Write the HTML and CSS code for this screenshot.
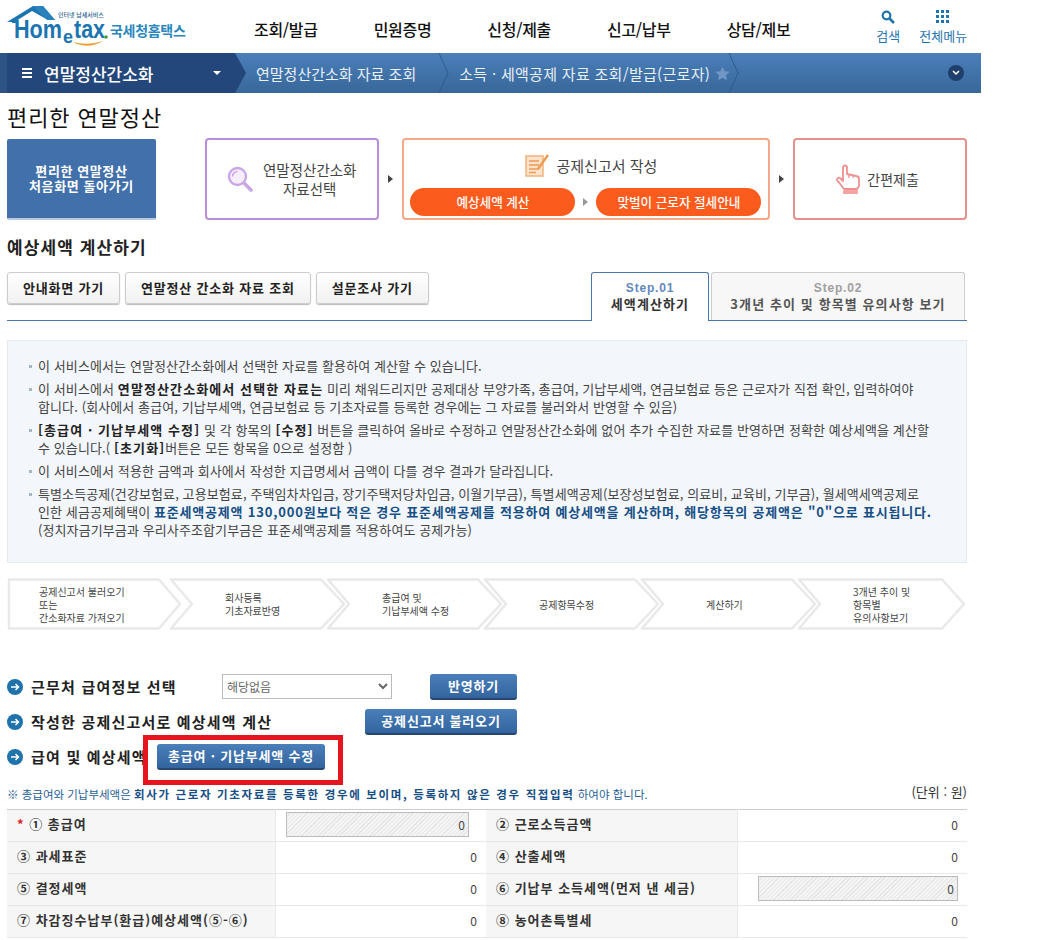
FILE: index.html
```html
<!DOCTYPE html>
<html lang="ko">
<head>
<meta charset="utf-8">
<title>편리한 연말정산</title>
<link rel="stylesheet" href="styles.css">
</head>
<body>
<header class="top">
  <svg class="logo" width="190" height="50" viewBox="0 0 190 50">
    <path d="M7 22 L33 6 L43 6 L55 20 L48 20 L32 11 L16 21 L16 23 L12 23 L12 22 Z" fill="#1c75b0"/>
    <path d="M33 6 L43 6 L55 20 L47 20 Z" fill="#2a82bd"/>
    <text x="58" y="17" class="logo-tiny">인터넷 납세서비스</text>
    <text x="14" y="38" class="logo-word" textLength="48" lengthAdjust="spacingAndGlyphs">Hom</text>
    <text x="63" y="43" class="logo-e">e</text>
    <text x="74" y="38" class="logo-word" textLength="31" lengthAdjust="spacingAndGlyphs">tax</text>
    <circle cx="106" cy="37" r="1.8" fill="#3d9a3f"/>
    <path d="M73 42 Q88 50 103 41 Q88 46 73 42 Z" fill="#f0a030"/>
    <text x="110" y="36" class="logo-kr">국세청홈택스</text>
  </svg>
  <nav class="gnb">
    <a>조회/발급</a><a>민원증명</a><a>신청/제출</a><a>신고/납부</a><a>상담/제보</a>
  </nav>
  <div class="tools">
    <div class="tool tool-search">
      <svg width="14" height="14" viewBox="0 0 14 14"><circle cx="5.5" cy="5.5" r="3.8" fill="none" stroke="#1f74ad" stroke-width="2.2"/><path d="M8.5 8.5 L13 13" stroke="#1f74ad" stroke-width="2.6"/></svg>
      <span>검색</span>
    </div>
    <div class="tool">
      <svg width="14" height="14" viewBox="0 0 14 14" fill="#1f74ad"><rect x="0" y="0" width="3" height="3"/><rect x="5" y="0" width="3" height="3"/><rect x="10" y="0" width="3" height="3"/><rect x="0" y="5" width="3" height="3"/><rect x="5" y="5" width="3" height="3"/><rect x="10" y="5" width="3" height="3"/><rect x="0" y="10" width="3" height="3"/><rect x="5" y="10" width="3" height="3"/><rect x="10" y="10" width="3" height="3"/></svg>
      <span>전체메뉴</span>
    </div>
  </div>
</header>

<div class="crumbs">
  <div class="crumb-main">
    <span class="burger"></span>
    <span class="crumb-title">연말정산간소화</span>
    <span class="caret"></span>
  </div>
  <span class="crumb crumb-a">연말정산간소화 자료 조회</span>
  <svg class="sep" width="12" height="40" viewBox="0 0 12 40"><path d="M1 0 L10 20 L1 40" fill="none" stroke="#2f5a90"/></svg>
  <span class="crumb crumb-b">소득 · 세액공제 자료 조회/발급(근로자)</span>
  <svg class="star" width="15" height="15" viewBox="0 0 24 24"><path d="M12 1 L15.4 8.4 L23.5 9.3 L17.5 14.8 L19.1 22.8 L12 18.8 L4.9 22.8 L6.5 14.8 L.5 9.3 L8.6 8.4 Z" fill="#7097c4"/></svg>
  <svg class="sep sep-end" width="12" height="40" viewBox="0 0 12 40"><path d="M1 0 L10 20 L1 40" fill="none" stroke="#2f5a90"/></svg>
  <span class="more"><svg width="8" height="6" viewBox="0 0 8 6"><path d="M1 1 L4 4 L7 1" fill="none" stroke="#fff" stroke-width="1.5"/></svg></span>
</div>

<main class="page">
  <h1 class="page-title">편리한 연말정산</h1>

  <section class="process">
    <a class="home-btn">편리한 연말정산<br>처음화면 돌아가기</a>
    <div class="pbox pbox-1">
      <svg width="26" height="26" viewBox="0 0 26 26"><circle cx="10.5" cy="10.5" r="8.5" fill="#f6effb" stroke="#c9a6e6" stroke-width="2.4"/><path d="M5.5 10.5 a5 5 0 0 1 5 -5" fill="none" stroke="#c9a6e6" stroke-width="1.6"/><path d="M17 17 L24 24" stroke="#c9a6e6" stroke-width="3.6" stroke-linecap="round"/></svg>
      <span>연말정산간소화<br>자료선택</span>
    </div>
    <span class="tri"></span>
    <div class="pbox-2">
      <div class="pbox-2-title">
        <svg width="25" height="23" viewBox="0 0 25 23"><rect x="1" y="2" width="17" height="20" fill="#fbe3cb" stroke="#f2b27c" stroke-width="1.5"/><path d="M4 7 H14 M4 11 H14 M4 15 H14 M4 18.500 H11" stroke="#e99c58" stroke-width="1.3"/><path d="M13 15 L23 1" stroke="#eb9a52" stroke-width="2.4"/></svg>
        <span>공제신고서 작성</span>
      </div>
      <div class="pills">
        <a class="pill">예상세액 계산</a>
        <span class="tri tri-sm"></span>
        <a class="pill">맞벌이 근로자 절세안내</a>
      </div>
    </div>
    <span class="tri"></span>
    <div class="pbox pbox-3">
      <svg width="26" height="30" viewBox="0 0 26 30"><path d="M8 17 V3.500 a2 2 0 0 1 4 0 V10 l9 2 a3 3 0 0 1 3 3 V22 l-2 3 H9 L2 16 a2 2 0 0 1 3 -2 Z" fill="#fff" stroke="#ef8f8f" stroke-width="1.8" stroke-linejoin="round"/><path d="M14 10 V14 M18 11 V14" stroke="#ef8f8f" stroke-width="1.3"/><rect x="8" y="26" width="15" height="4" rx="1" fill="#f5a3a3"/></svg>
      <span>간편제출</span>
    </div>
  </section>

  <h2 class="sub-title">예상세액 계산하기</h2>

  <section class="tabbar">
    <div class="btns">
      <a class="btn-light">안내화면 가기</a>
      <a class="btn-light">연말정산 간소화 자료 조회</a>
      <a class="btn-light">설문조사 가기</a>
    </div>
    <div class="tabs">
      <div class="tab tab-on"><b class="tab-step">Step.01</b><b>세액계산하기</b></div>
      <div class="tab tab-off"><b class="tab-step">Step.02</b><b>3개년 추이 및 항목별 유의사항 보기</b></div>
    </div>
  </section>

  <ul class="notice">
    <li>이 서비스에서는 연말정산간소화에서 선택한 자료를 활용하여 계산할 수 있습니다.</li>
    <li>이 서비스에서 <b>연말정산간소화에서 선택한 자료는</b> 미리 채워드리지만 공제대상 부양가족, 총급여, 기납부세액, 연금보험료 등은 근로자가 직접 확인, 입력하여야<br>합니다. (회사에서 총급여, 기납부세액, 연금보험료 등 기초자료를 등록한 경우에는 그 자료를 불러와서 반영할 수 있음)</li>
    <li><b>[총급여 · 기납부세액 수정]</b> 및 각 항목의 <b>[수정]</b> 버튼을 클릭하여 올바로 수정하고 연말정산간소화에 없어 추가 수집한 자료를 반영하면 정확한 예상세액을 계산할<br>수 있습니다.( <b>[초기화]</b>버튼은 모든 항목을 0으로 설정함 )</li>
    <li>이 서비스에서 적용한 금액과 회사에서 작성한 지급명세서 금액이 다를 경우 결과가 달라집니다.</li>
    <li>특별소득공제(건강보험료, 고용보험료, 주택임차차입금, 장기주택저당차입금, 이월기부금), 특별세액공제(보장성보험료, 의료비, 교육비, 기부금), 월세액세액공제로<br>인한 세금공제혜택이 <b class="em">표준세액공제액 130,000원보다 적은 경우 표준세액공제를 적용하여 예상세액을 계산하며, 해당항목의 공제액은 "0"으로 표시됩니다.</b><br>(정치자금기부금과 우리사주조합기부금은 표준세액공제를 적용하여도 공제가능)</li>
  </ul>

  <ol class="steps">
    <li class="step step-first">
      <svg class="step-bg" width="176" height="52" viewBox="0 0 176 52"><path d="M2 1.500 H152 L173 26 L152 50.500 H2 Z" fill="#fff" stroke="#e9e9e9" stroke-width="2.5" stroke-linejoin="round"/></svg>
      <span>공제신고서 불러오기<br>또는<br>간소화자료 가져오기</span>
    </li>
    <li class="step">
      <svg class="step-bg" width="200" height="52" viewBox="0 0 200 52"><path d="M7 1.500 H157 L180 26 L157 50.500 H7 L28 26 Z" fill="none" stroke="#e9e9e9" stroke-width="2.5" stroke-linejoin="round"/></svg>
      <span>회사등록<br>기초자료반영</span>
    </li>
    <li class="step">
      <svg class="step-bg" width="200" height="52" viewBox="0 0 200 52"><path d="M7 1.500 H157 L180 26 L157 50.500 H7 L28 26 Z" fill="none" stroke="#e9e9e9" stroke-width="2.5" stroke-linejoin="round"/></svg>
      <span>총급여 및<br>기납부세액 수정</span>
    </li>
    <li class="step">
      <svg class="step-bg" width="200" height="52" viewBox="0 0 200 52"><path d="M7 1.500 H157 L180 26 L157 50.500 H7 L28 26 Z" fill="none" stroke="#e9e9e9" stroke-width="2.5" stroke-linejoin="round"/></svg>
      <span>공제항목수정</span>
    </li>
    <li class="step step-five">
      <svg class="step-bg" width="200" height="52" viewBox="0 0 200 52"><path d="M7 1.500 H157 L180 26 L157 50.500 H7 L28 26 Z" fill="none" stroke="#e9e9e9" stroke-width="2.5" stroke-linejoin="round"/></svg>
      <span>계산하기</span>
    </li>
    <li class="step">
      <svg class="step-bg" width="200" height="52" viewBox="0 0 200 52"><path d="M7 1.500 H150 L172 26 L150 50.500 H7 L28 26 Z" fill="none" stroke="#e9e9e9" stroke-width="2.5" stroke-linejoin="round"/></svg>
      <span>3개년 추이 및<br>항목별<br>유의사항보기</span>
    </li>
  </ol>

  <section class="forms">
    <div class="frow frow-1">
      <span class="bullet"><svg width="16" height="16" viewBox="0 0 16 16"><circle cx="8" cy="8" r="8" fill="#1f73ad"/><path d="M4 8 H11 M8.500 5 L11.500 8 L8.500 11" fill="none" stroke="#fff" stroke-width="1.5"/></svg></span>
      <strong class="flabel flabel-1">근무처 급여정보 선택</strong>
      <select class="sel"><option>해당없음</option></select>
      <a class="btn-blue btn-apply">반영하기</a>
    </div>
    <div class="frow frow-2">
      <span class="bullet"><svg width="16" height="16" viewBox="0 0 16 16"><circle cx="8" cy="8" r="8" fill="#1f73ad"/><path d="M4 8 H11 M8.500 5 L11.500 8 L8.500 11" fill="none" stroke="#fff" stroke-width="1.5"/></svg></span>
      <strong class="flabel flabel-2">작성한 공제신고서로 예상세액 계산</strong>
      <a class="btn-blue btn-load">공제신고서 불러오기</a>
    </div>
    <div class="frow frow-3">
      <span class="bullet"><svg width="16" height="16" viewBox="0 0 16 16"><circle cx="8" cy="8" r="8" fill="#1f73ad"/><path d="M4 8 H11 M8.500 5 L11.500 8 L8.500 11" fill="none" stroke="#fff" stroke-width="1.5"/></svg></span>
      <strong class="flabel flabel-3">급여 및 예상세액</strong>
      <a class="btn-blue btn-edit">총급여 · 기납부세액 수정</a>
      <span class="redbox"></span>
    </div>
  </section>

  <div class="note-row">
    <p class="note">※ 총급여와 기납부세액은 <b>회사가 근로자 기초자료를 등록한 경우에 보이며, 등록하지 않은 경우 직접입력</b> 하여야 합니다.</p>
    <span class="unit">(단위 : 원)</span>
  </div>

  <table class="tbl">
    <colgroup><col class="c1"><col class="c2"><col class="c3"><col class="c4"></colgroup>
    <tr>
      <th><i class="req">*</i> ① 총급여</th>
      <td><div class="hatch hatch-1">0</div></td>
      <th>② 근로소득금액</th>
      <td>0</td>
    </tr>
    <tr><th>③ 과세표준</th><td>0</td><th>④ 산출세액</th><td>0</td></tr>
    <tr>
      <th>⑤ 결정세액</th>
      <td>0</td>
      <th>⑥ 기납부 소득세액(먼저 낸 세금)</th>
      <td><div class="hatch hatch-2">0</div></td>
    </tr>
    <tr><th>⑦ 차감징수납부(환급)예상세액(⑤-⑥)</th><td>0</td><th>⑧ 농어촌특별세</th><td>0</td></tr>
  </table>
</main>
</body>
</html>
```

FILE: styles.css
```css
* { box-sizing: border-box; }
html, body { margin: 0; padding: 0; }
body {
  width: 1049px;
  height: 940px;
  overflow: hidden;
  background: #fff;
  color: #333;
  font-family: "Noto Sans CJK KR", "Noto Sans", sans-serif;
  font-size: 12px;
}
a { color: inherit; text-decoration: none; }

/* header */
.top { display: flex; height: 53px; width: 981px; position: relative; }
.logo { flex: none; }
.logo-tiny { font-size: 6px; fill: #2a5f8f; font-weight: 500; }
.logo-word { font-family: "Liberation Sans", sans-serif; font-size: 25px; font-weight: 700; fill: #1c75b0; }
.logo-e { font-family: "Liberation Sans", sans-serif; font-size: 18px; font-weight: 700; fill: #1c75b0; }
.logo-kr { font-size: 14px; font-weight: 700; fill: #2a86bd; letter-spacing: -.3px; }
.gnb { display: flex; gap: 56px; margin-left: 64px; padding-top: 18px; font-size: 16px; font-weight: 500; color: #111; line-height: 22px; letter-spacing: -.3px; }
.tools { display: flex; gap: 19px; margin-left: 86px; padding-top: 10px; color: #1f74ad; font-size: 13px; }
.tool { display: flex; flex-direction: column; align-items: center; gap: 3px; line-height: 18px; }
.tool svg { display: block; }
.tool-search { width: 24px; }

/* breadcrumb */
.crumbs {
  display: flex;
  align-items: center;
  width: 981px;
  height: 40px;
  background: linear-gradient(#4b7fba, #386799);
  color: #e8f0f8;
  font-size: 15px;
}
.crumb-main {
  display: flex;
  align-items: center;
  width: 246px;
  height: 40px;
  padding-left: 22px;
  background: #24477b;
  clip-path: polygon(0 0, 235px 0, 246px 20px, 235px 40px, 0 40px);
  color: #fff;
  font-size: 17px;
  font-weight: 500;
  box-shadow: inset 7px 0 0 #2d5284;
}
.burger { width: 10px; height: 10px; border-top: 2px solid #fff; border-bottom: 2px solid #fff; position: relative; flex: none; }
.burger::after { content: ""; position: absolute; left: 0; right: 0; top: 2px; height: 2px; background: #fff; }
.crumb-title { margin-left: 12px; }
.caret { margin-left: 60px; border: 4px solid transparent; border-top: 4px solid #fff; border-bottom: 0; }
.crumb-a { margin-left: 10px; }
.sep { flex: none; margin-left: 22px; }
.crumb-b { margin-left: 9px; letter-spacing: .3px; }
.star { margin-left: 5px; flex: none; }
.sep-end { margin-left: -2px; }
.more { display: flex; align-items: center; justify-content: center; width: 16px; height: 16px; margin-left: auto; margin-right: 17px; border-radius: 50%; background: #1f3f6c; }

/* page */
.page { width: 967px; padding-left: 7px; }
.page-title { margin: 0; padding-top: 9px; height: 45px; font-size: 22px; line-height: 28px; font-weight: 400; color: #111; letter-spacing: .9px; }

.process { display: flex; align-items: center; height: 82px; font-size: 14.500px; }
.home-btn {
  display: flex; align-items: center; justify-content: center;
  width: 149px; height: 81px; margin-right: 49px;
  background: #4170ab; border-radius: 2px; border-bottom: 2px solid #b5c9e2;
  color: #fff; font-size: 13px; font-weight: 700; line-height: 15px; text-align: center; letter-spacing: .6px;
}
.pbox {
  display: flex; align-items: center; justify-content: center;
  width: 174px; height: 82px; background: #fff; border: 2px solid; border-radius: 4px;
  color: #444; line-height: 19px; text-align: center;
}
.pbox-1 { border-color: #b78fdd; gap: 10px; }
.pbox-3 { border-color: #e58f8f; gap: 6px; font-size: 14px; padding-right: 6px; }
.tri { flex: none; margin: 0 9px; border: 4px solid transparent; border-left: 5px solid #444; border-right: 0; width: 0; height: 0; }
.tri-sm { margin: 0 8px; border-left-color: #999; }
.pbox-2 {
  width: 369px; height: 82px; border: 2px solid #f5a888; border-radius: 4px;
  display: flex; flex-direction: column; align-items: center;
}
.pbox-2-title { display: flex; align-items: center; gap: 7px; height: 48px; color: #444; padding-top: 2px; padding-left: 10px; font-size: 15px; }
.pills { display: flex; align-items: center; }
.pill {
  display: block; width: 165px; height: 28px; border-radius: 14px;
  background: #fb5c1e; color: #fff; font-size: 12.600px; line-height: 27px; text-align: center; font-weight: 500;
}

.sub-title { margin: 16px 0 0; height: 36px; font-size: 17px; line-height: 22px; font-weight: 700; color: #222; letter-spacing: 1.100px; }

.tabbar { display: flex; justify-content: space-between; align-items: flex-start; height: 49px; border-bottom: 1px solid #4a75a8; }
.btns { display: flex; gap: 5px; }
.btn-light {
  display: block; height: 32px; padding: 0 15px; border: 1px solid #ccc; border-radius: 3px;
  background: linear-gradient(#fff, #f1f1f1); box-shadow: 0 1px 1px #bbb;
  color: #222; font-weight: 700; line-height: 30px; letter-spacing: .8px; font-size: 13px;
}
.tabs { display: flex; height: 49px; margin-right: 2px; }
.tab { display: flex; flex-direction: column; align-items: center; padding-top: 8px; line-height: 15px; border: 1px solid; border-bottom: 0; border-radius: 3px 3px 0 0; font-size: 13px; letter-spacing: 1.100px; }
.tab-step { font-family: "Liberation Sans", sans-serif; font-size: 12px; letter-spacing: .8px; }
.tab-on { width: 118px; background: #fff; border-color: #4a75a8; color: #333; height: 49px; }
.tab-on .tab-step { color: #6288bc; }
.tab-off { width: 254px; margin-left: 2px; height: 48px; background: #f7f7f7; border-color: #ccc; color: #555; }
.tab-off .tab-step { color: #a0a0a0; }

.notice {
  list-style: none; margin: 19px 0 0; height: 223px; padding: 16px 30px 0;
  background: #f3f6fb; border: 1px solid #e6eaf0;
  color: #444; font-size: 13px; line-height: 18px; letter-spacing: .1px;
}
.notice li { position: relative; margin-bottom: 5px; white-space: nowrap; }
.notice li::before { content: ""; position: absolute; left: -9px; top: 8px; width: 3px; height: 3px; background: #a9b6c4; }
.notice b { color: #222; letter-spacing: 1.100px; }
.notice .em { color: #174f85; letter-spacing: .8px; }

.steps { list-style: none; display: flex; margin: 15px 0 0; padding: 0; height: 52px; }
.step { position: relative; flex: none; width: 157px; display: flex; align-items: center; padding-left: 61px; font-size: 10px; line-height: 13px; color: #444; white-space: nowrap; }
.step-first { padding-left: 32px; }
.step-five { padding-left: 71px; }
.step-bg { position: absolute; left: 0; top: 0; }
.step span { position: relative; }

.forms { margin-top: 39px; width: 510px; display: flex; flex-direction: column; }
.frow { display: flex; align-items: center; height: 35px; position: relative; }
.bullet { flex: none; display: block; width: 16px; height: 16px; margin-right: 8px; }
.bullet svg { display: block; }
.flabel { font-size: 15px; font-weight: 700; color: #222; white-space: nowrap; letter-spacing: 1.200px; }
.flabel-1 { width: 191px; }
.flabel-2 { flex: 1; }
.flabel-3 { width: 112px; flex: none; }
.sel { width: 170px; height: 25px; margin-right: 38px; background: #fff; border: 1px solid #bbb; padding-left: 0; font-family: inherit; font-size: 12px; color: #666; }
.btn-blue {
  display: block; height: 26px; border-radius: 3px; background: linear-gradient(#4a7fba, #33649e);
  border-bottom: 2px solid #27456f; color: #fff; font-weight: 700; line-height: 23px; text-align: center; font-size: 13px; letter-spacing: .8px;
}
.btn-apply { width: 87px; }
.btn-load { width: 152px; }
.btn-edit { width: 168px; margin-left: 14px; }
.redbox { position: absolute; left: 136px; top: -4px; width: 200px; height: 50px; border: 5px solid #e5141f; }

.note-row { display: flex; justify-content: space-between; align-items: flex-start; margin-top: 10px; height: 25px; }
.note { margin: 3px 0 0; font-size: 11.500px; line-height: 15px; color: #1f5f95; white-space: nowrap; }
.note b { font-weight: 700; color: #174f85; letter-spacing: 1.650px; }
.unit { font-size: 13px; line-height: 15px; color: #333; }

.tbl { width: 960px; border-collapse: collapse; table-layout: fixed; border-top: 1px solid #ccc; border-bottom: 1px solid #ccc; }
.c1 { width: 268px; } .c2 { width: 211px; } .c3 { width: 251px; } .c4 { width: 230px; }
.tbl tr { height: 32px; border-bottom: 1px solid #e8e8e8; }
.tbl th { padding: 0 0 4px 10px; background: #f6f6f6; border-right: 1px solid #e8e8e8; text-align: left; font-size: 13px; font-weight: 700; color: #333; letter-spacing: 1px; white-space: nowrap; }
.tbl td { padding: 0 9px 2px 0; text-align: right; font-size: 12px; color: #444; }
.req { color: #d8202a; font-style: normal; }
.hatch {
  height: 25px; line-height: 23px; padding-right: 3px; border: 1px solid #bbb; font-size: 12px; color: #444;
  background: repeating-linear-gradient(135deg, #f4f4f4 0 2px, #e6e6e6 2px 3px);
}
.hatch-1 { width: 183px; margin-left: auto; margin-right: 8px; }
.hatch-2 { margin-left: 20px; }
```
